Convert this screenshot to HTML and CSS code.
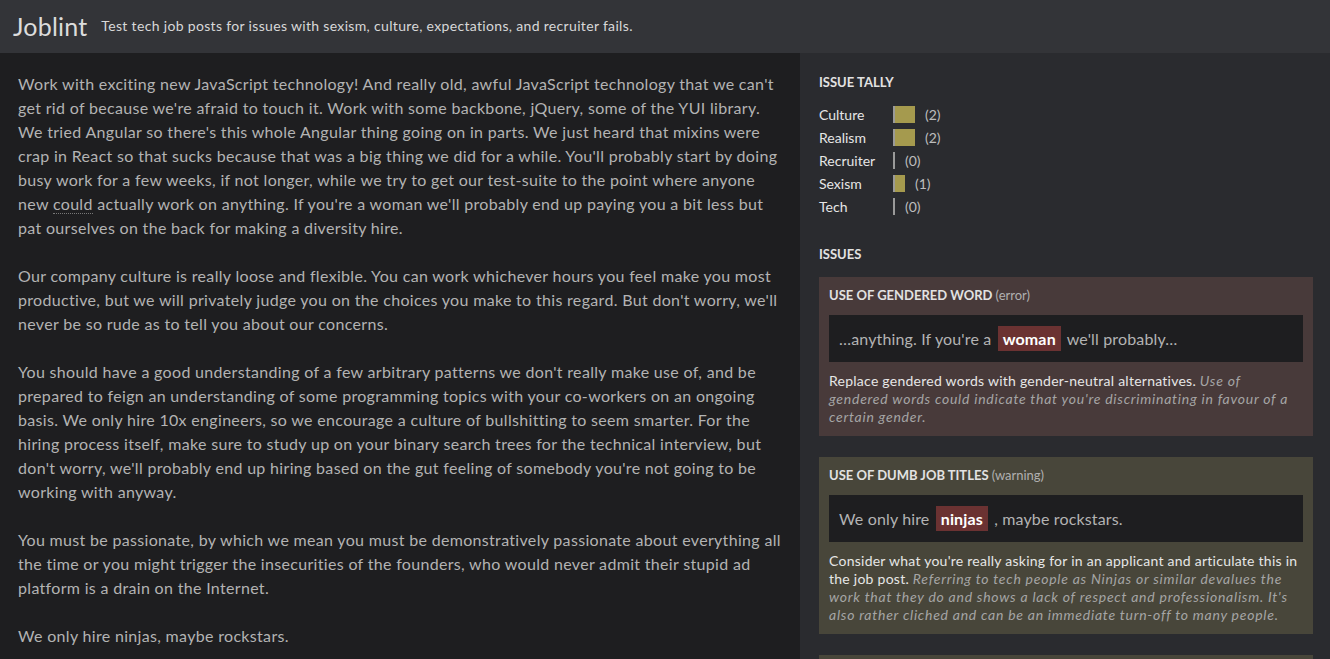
FILE: index.html
```html
<!DOCTYPE html>
<html>
<head>
<meta charset="utf-8">
<title>Joblint</title>
<link rel="stylesheet" href="styles.css">
</head>
<body>
<header class="header">
  <h1 class="logo">Joblint</h1>
  <p class="tagline">Test tech job posts for issues with sexism, culture, expectations, and recruiter fails.</p>
</header>
<main class="main">
  <section class="post">
    <p>Work with exciting new JavaScript technology! And really old, awful JavaScript technology that we can't get rid of because we're afraid to touch it. Work with some backbone, jQuery, some of the YUI library. We tried Angular so there's this whole Angular thing going on in parts. We just heard that mixins were crap in React so that sucks because that was a big thing we did for a while. You'll probably start by doing busy work for a few weeks, if not longer, while we try to get our test-suite to the point where anyone new <span class="spell">could</span> actually work on anything. If you're a woman we'll probably end up paying you a bit less but pat ourselves on the back for making a diversity hire.</p>
    <p>Our company culture is really loose and flexible. You can work whichever hours you feel make you most productive, but we will privately judge you on the choices you make to this regard. But don't worry, we'll never be so rude as to tell you about our concerns.</p>
    <p>You should have a good understanding of a few arbitrary patterns we don't really make use of, and be prepared to feign an understanding of some programming topics with your co-workers on an ongoing basis. We only hire 10x engineers, so we encourage a culture of bullshitting to seem smarter. For the hiring process itself, make sure to study up on your binary search trees for the technical interview, but don't worry, we'll probably end up hiring based on the gut feeling of somebody you're not going to be working with anyway.</p>
    <p>You must be passionate, by which we mean you must be demonstratively passionate about everything all the time or you might trigger the insecurities of the founders, who would never admit their stupid ad platform is a drain on the Internet.</p>
    <p>We only hire ninjas, maybe rockstars.</p>
  </section>
  <aside class="sidebar">
    <h2 class="side-title">Issue Tally</h2>
    <ul class="tally">
      <li class="tally-row"><span class="tally-label">Culture</span><span class="tally-bar" style="width:20px"></span><span class="tally-count">(2)</span></li>
      <li class="tally-row"><span class="tally-label">Realism</span><span class="tally-bar" style="width:20px"></span><span class="tally-count">(2)</span></li>
      <li class="tally-row"><span class="tally-label">Recruiter</span><span class="tally-bar" style="width:0px"></span><span class="tally-count">(0)</span></li>
      <li class="tally-row"><span class="tally-label">Sexism</span><span class="tally-bar" style="width:10px"></span><span class="tally-count">(1)</span></li>
      <li class="tally-row"><span class="tally-label">Tech</span><span class="tally-bar" style="width:0px"></span><span class="tally-count">(0)</span></li>
    </ul>
    <h2 class="side-title issues-title">Issues</h2>
    <div class="issue issue-error">
      <h3 class="issue-title">Use of gendered word <span class="issue-level">(error)</span></h3>
      <div class="issue-context">…anything. If you're a <mark class="hl">woman</mark> we'll probably…</div>
      <p class="issue-desc">Replace gendered words with gender-neutral alternatives. <em>Use of gendered words could indicate that you're discriminating in favour of a certain gender.</em></p>
    </div>
    <div class="issue issue-warning">
      <h3 class="issue-title">Use of dumb job titles <span class="issue-level">(warning)</span></h3>
      <div class="issue-context">We only hire <mark class="hl">ninjas</mark> , maybe rockstars.</div>
      <p class="issue-desc">Consider what you're really asking for in an applicant and articulate this in the job post. <em>Referring to tech people as Ninjas or similar devalues the work that they do and shows a lack of respect and professionalism. It's also rather cliched and can be an immediate turn-off to many people.</em></p>
    </div>
    <div class="issue issue-warning issue-stub"></div>
  </aside>
</main>
</body>
</html>
```

FILE: styles.css
```css
* { box-sizing: border-box; }
html, body { margin: 0; padding: 0; }
body {
  font-family: Lato, "Noto Sans", sans-serif;
  background: #1e1e20;
  color: #b3b3b3;
  height: 659px;
  overflow: hidden;
}
.header {
  height: 53px;
  background: #333438;
  display: flex;
  align-items: center;
  padding: 0 13px;
  gap: 14px;
}
.logo {
  margin: 0 0 1px;
  font-size: 25px;
  font-weight: 400;
  color: #dcdcdc;
  letter-spacing: 0.2px;
}
.tagline {
  margin: 0 0 3px;
  font-size: 14px;
  letter-spacing: 0.33px;
  color: #d8d8d8;
}
.main {
  display: flex;
  height: 606px;
  overflow: hidden;
}
.post {
  width: 800px;
  flex: none;
  padding: 19px 16px 0 18px;
  font-size: 16px;
  letter-spacing: 0.32px;
  line-height: 24px;
  color: #b3b3b3;
  overflow: hidden;
}
.post p { margin: 0 0 24px; }
.spell { border-bottom: 1px dotted #777; }
.sidebar {
  flex: 1;
  background: #2a2b2f;
  padding: 20px 17px 0 19px;
  overflow: hidden;
}
.side-title {
  margin: 0;
  font-size: 13px;
  font-weight: 700;
  text-transform: uppercase;
  color: #e2e2e2;
  line-height: 18px;
}
.tally {
  list-style: none;
  margin: 12px 0 0;
  padding: 0;
}
.tally-row {
  display: flex;
  align-items: center;
  height: 23px;
  font-size: 14px;
  color: #e6e6e6;
}
.tally-label { width: 74px; flex: none; }
.tally-bar {
  height: 17px;
  border-left: 2px solid #9a9a9a;
  background: #a59a4e;
  box-sizing: content-box;
  flex: none;
}
.tally-count { margin-left: 10px; color: #bdbdbd; }
.issues-title { margin-top: 27px; }
.issue {
  padding: 9px 10px 10px;
  margin-bottom: 21px;
}
.issues-title + .issue { margin-top: 14px; }
.issue-error { background: #483a3a; }
.issue-warning { background: #48463a; }
.issue-stub { height: 4px; padding: 0; }
.issue-title {
  margin: 0;
  font-size: 13px;
  font-weight: 700;
  text-transform: uppercase;
  color: #e2e2e2;
  line-height: 18px;
}
.issue-level {
  text-transform: none;
  font-weight: 400;
  color: #b0b0b0;
}
.issue-context {
  margin-top: 11px;
  background: #1e1e20;
  padding: 11px 10px;
  font-size: 16px;
  letter-spacing: 0.15px;
  line-height: 25px;
  color: #b3b3b3;
}
.hl {
  background: #6b3232;
  color: #fff;
  font-weight: 700;
  padding: 3px 5px;
  margin: 0 2px;
}
.issue-desc {
  margin: 10px 0 0;
  font-size: 14px;
  letter-spacing: 0.25px;
  line-height: 18px;
  color: #e6e6e6;
}
.issue-desc em { color: #a5a5a5; letter-spacing: 0.75px; }
```
